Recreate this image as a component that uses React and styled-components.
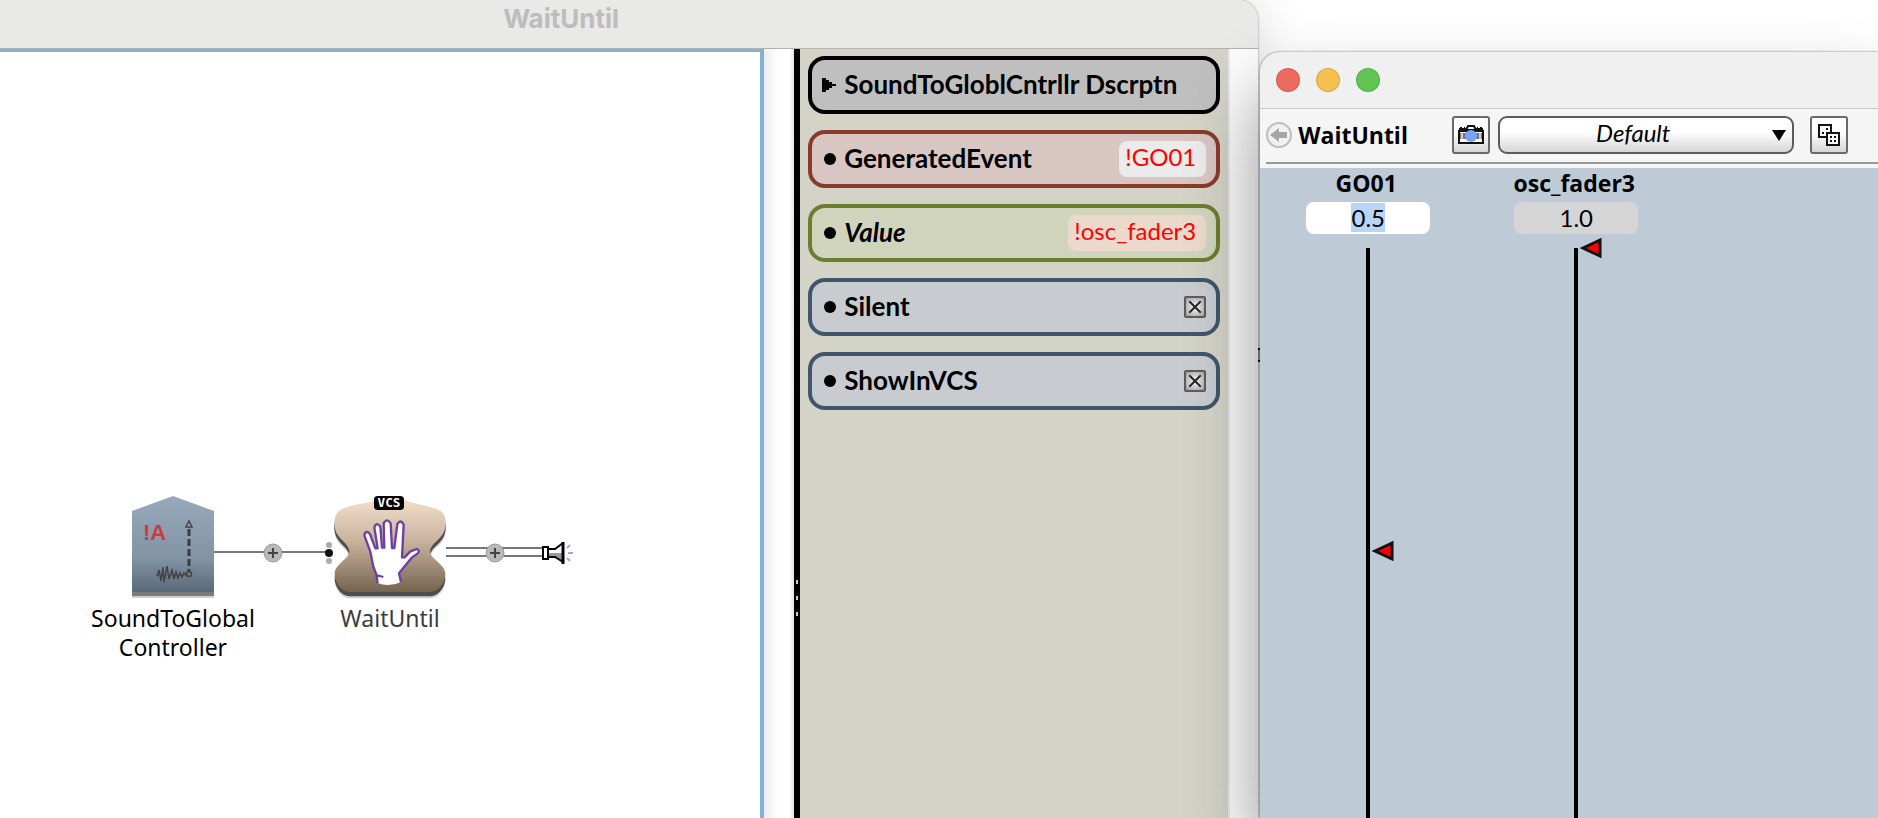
import React, { useEffect, useRef, useState } from 'react';
import styled, { createGlobalStyle, css } from 'styled-components';

const GlobalStyle = createGlobalStyle`
  * {
    box-sizing: border-box;
  }
  body {
    margin: 0;
    overflow: hidden;
    font-family: Lato, 'Liberation Sans', sans-serif;
    color: #000;
  }
  button, input, select {
    margin: 0;
    font: inherit;
    color: inherit;
  }
`;

const Desktop = styled.div`
  display: flex;
  height: 100vh;
  background: #fff;
`;

/* editor window */

const EditorWindow = styled.section`
  flex: 0 0 67%;
  display: flex;
  flex-direction: column;
  min-width: 0;
  background: #fcfcfc;
  border-top-right-radius: 20px;
  box-shadow: 0 0 2px #777, 0 0 50px rgba(0, 0, 0, 0.15);
`;
const EditorTitle = styled.header`
  height: 49px;
  padding-right: 136px;
  border-bottom: 1px solid #b3b3ab;
  border-top-right-radius: 20px;
  background: #e9e9e7;
  text-align: center;
`;
const EditorHeading = styled.h1`
  margin: 0;
  font: 700 26px/38px Inter, sans-serif;
  color: #bdbdbb;
`;
const EditorBody = styled.div`
  flex: 1;
  display: flex;
  min-height: 0;
`;
const Canvas = styled.main`
  position: relative;
  flex: 1;
  border: solid #84afd9;
  border-width: 3px 4px 0 0;
  background: #fff;
`;
const Gutter = styled.div`
  width: 30px;
  background: linear-gradient(90deg, #ededf0, #fcfcfc 40%, #fff 85%, #e4e4e4);
`;
const Splitter = styled.div`
  display: flex;
  flex-direction: column;
  align-items: center;
  gap: 12px;
  width: 6px;
  padding-top: 531px;
  background: #000;
`;
const Grip = styled.span`
  flex: none;
  width: 2px;
  height: 4px;
  background: #ccc;
`;
const Parameters = styled.aside`
  display: flex;
  flex-direction: column;
  gap: 16px;
  width: 428px;
  padding: 7px 8px;
  background: #d3d3c8;
`;
const Strip = styled.div`
  width: 30px;
  border-left: 2px solid #e9e9e9;
  background: #fcfcfc;
`;

/* sound nodes on the canvas */

const Node = styled.figure`
  position: absolute;
  left: ${({ $x }) => $x}px;
  top: ${({ $y }) => $y}px;
  display: flex;
  flex-direction: column;
  align-items: center;
  width: 180px;
  margin: 0;
  gap: 4px;

  svg {
    display: block;
  }
`;
const NodeLabel = styled.figcaption`
  font: 400 23px/29px 'Noto Sans', sans-serif;
  color: ${({ $muted }) => ($muted ? '#3c3c3c' : '#000')};
  text-align: center;
`;
const Wire = styled.svg`
  position: absolute;
  left: ${({ $x }) => $x}px;
  top: 482px;
`;

/* parameter rows */

const tones = {
  plain: { line: '#000', fill: '#bfbfbf' },
  event: { line: '#8a3a2b', fill: '#d8c6c3' },
  value: { line: '#6c7d2f', fill: '#d0d4bd' },
  flag: { line: '#41566b', fill: '#c8ccd0' },
};

const Row = styled.div`
  display: flex;
  align-items: center;
  height: 58px;
  padding: 0 10px;
  border: 4px solid ${({ $tone }) => tones[$tone].line};
  border-radius: 17px;
  background: ${({ $tone }) => tones[$tone].fill};
`;
const Disclosure = styled.button`
  display: flex;
  align-items: center;
  width: 100%;
  padding: 0;
  border: 0;
  background: none;
  text-align: left;
`;
const Bullet = styled.span`
  flex: none;
  width: 12px;
  height: 12px;
  margin: 0 8px 0 2px;
  border-radius: 50%;
  background: #000;
`;
const labelText = css`
  padding-bottom: 2px;
  font-size: 26px;
  font-weight: 700;
  line-height: 32px;
  font-style: ${({ $italic }) => ($italic ? 'italic' : 'normal')};
`;
const RowLabel = styled.label`
  ${labelText}
  flex: 1;
`;
const RowTitle = styled.span`
  ${labelText}
`;
const Chip = styled.input`
  field-sizing: content;
  height: 36px;
  padding: 0 10px 6px 6px;
  border: 0;
  border-radius: 8px;
  background: ${({ $warm }) => ($warm ? '#ebdacb' : '#ebebeb')};
  color: #f00;
  font-size: 24px;
`;
const Check = styled.input`
  appearance: none;
  display: grid;
  place-items: center;
  width: 22px;
  height: 22px;
  border: 2px solid #5c5c5c;
  border-radius: 2px;
  background: radial-gradient(#ddd 30%, #a0a0a0);

  &:checked::before {
    content: '';
    width: 12px;
    height: 12px;
    background:
      linear-gradient(45deg, transparent 43%, #333 43% 57%, transparent 57%),
      linear-gradient(-45deg, transparent 43%, #333 43% 57%, transparent 57%);
  }
`;

/* control surface window */

const ControlWindow = styled.section`
  position: relative;
  flex: 1;
  display: flex;
  flex-direction: column;
  min-width: 0;
  margin: 52px 0 0 2px;
  border-top-left-radius: 20px;
  background: #bfcad7;
  box-shadow: 0 0 2px #555, 0 40px 70px rgba(0, 0, 0, 0.42);
`;
const EdgeMark = styled.span`
  position: absolute;
  left: -2px;
  top: 296px;
  width: 2px;
  height: 14px;
  border: solid #000;
  border-width: 2px 0;
  background: #666;
`;
const ControlTitle = styled.header`
  display: flex;
  align-items: center;
  gap: 16px;
  height: 57px;
  padding-left: 16px;
  border-bottom: 1px solid #c8c8c8;
  border-top-left-radius: 20px;
  background: #f0f0f0;
`;
const Light = styled.button`
  width: 24px;
  height: 24px;
  padding: 0;
  border: 1px solid rgba(0, 0, 0, 0.12);
  border-radius: 50%;
  background: ${({ $color }) => $color};
`;
const Toolbar = styled.div`
  padding: 0 0 4px 6px;
  background: #f5f5f5;
`;
const ToolbarItems = styled.div`
  display: flex;
  align-items: center;
  height: 55px;
  padding-right: 30px;
  padding-bottom: 2px;
  border-bottom: 2px solid #999;
`;
const BackButton = styled.button`
  display: flex;
  padding: 0;
  border: 0;
  background: none;
`;
const ToolbarTitle = styled.h2`
  flex: 0 0 160px;
  margin: 0;
  padding-left: 6px;
  font: 700 23px/32px 'Open Sans', sans-serif;
`;
const IconButton = styled.button`
  display: grid;
  place-items: center;
  flex: 0 0 38px;
  height: 38px;
  padding: 0;
  border: 2px solid #6a6a6a;
  border-radius: 3px;
  background: linear-gradient(#fff 40%, #d6d6d6);
`;
const PresetBox = styled.div`
  position: relative;
  flex: 1;
  height: 38px;
  margin: 0 16px 0 8px;
`;
const Preset = styled.select`
  appearance: none;
  width: 100%;
  height: 38px;
  padding: 0 26px 5px 0;
  border: 2px solid #5c5c5c;
  border-radius: 9px;
  background: linear-gradient(#fff 40%, #d6d6d6);
  font-size: 24px;
  font-style: italic;
  text-align: center;
  text-align-last: center;
`;
const PresetArrow = styled.svg`
  position: absolute;
  right: 7px;
  top: 13px;
  pointer-events: none;
`;
const Faders = styled.div`
  flex: 1;
  display: flex;
  padding-left: 4px;
  min-height: 0;
  overflow: hidden;
`;
const FaderColumn = styled.div`
  display: flex;
  flex-direction: column;
  align-items: center;
  width: 208px;

  > * {
    flex: none;
  }
`;
const FaderLabel = styled.label`
  padding-right: 4px;
  font: 700 23px/30px 'Open Sans', sans-serif;
`;
const FaderValue = styled.input`
  width: 124px;
  height: 32px;
  margin-top: 4px;
  padding: 0 0 2px;
  border: 0;
  border-radius: 8px;
  outline: 0;
  background: ${({ $idle }) => ($idle ? '#d5d5d5' : '#fff')};
  font-size: 24px;
  text-align: center;

  &::selection {
    background: #b8d5f8;
    color: #000;
  }
`;
const FaderTrack = styled.div`
  position: relative;
  width: 4px;
  height: calc(100vh - 212px);
  margin-top: 14px;
  background: #000;
`;
const FaderRange = styled.input`
  position: absolute;
  inset: 0 auto 0 -10px;
  width: 40px;
  height: 100%;
  writing-mode: vertical-lr;
  direction: rtl;
  opacity: 0;
`;
const Marker = styled.svg`
  position: absolute;
  left: 6px;
  margin-top: -11px;
  pointer-events: none;
`;

function PlusJoint({ cx, cy }) {
  return (
    <g>
      <circle cx={cx} cy={cy} r="9" fill="#b9b9b9" stroke="#9a9a9a" />
      <path d={`M${cx - 5} ${cy}h10M${cx} ${cy - 5}v10`} stroke="#444" strokeWidth="2" />
    </g>
  );
}

function SoundIcon() {
  return (
    <svg width="88" height="104" viewBox="0 0 88 104" aria-hidden="true">
      <defs>
        <linearGradient id="steel" x1="0" y1="0" x2="0" y2="1">
          <stop offset="0" stopColor="#98a9bb" />
          <stop offset="0.65" stopColor="#8293a4" />
          <stop offset="1" stopColor="#5a6979" />
        </linearGradient>
      </defs>
      <path d="M3 20L44 5L85 20V102H3Z" fill="#777" opacity="0.35" />
      <path d="M3 20L44 5L85 20V100H3Z" fill="#7b7b7b" />
      <path d="M3 15L44 0L85 15V96H3Z" fill="url(#steel)" />
      <text x="14" y="44" fontFamily="Liberation Sans" fontSize="22" fontWeight="700" fill="#cf3a3c">!A</text>
      <path d="M60 33V75" stroke="#3c3c3c" strokeWidth="3" strokeDasharray="7 3" />
      <path d="M57 31L60 25L63 31Z" fill="#98a9bb" stroke="#444" strokeWidth="1.5" />
      <circle cx="60" cy="78" r="2.5" fill="none" stroke="#444" strokeWidth="1.5" />
      <path d="M27 79H57" stroke="#72508a" strokeWidth="1" />
      <path
        d="M28 80L30 74L32 85L34 71L35 86L38 70L40 83L43 74L45 83L47 76L49 82L51 77L53 81L55 77L57 79"
        fill="none"
        stroke="#444"
        strokeWidth="1.5"
      />
    </svg>
  );
}

const waitBody =
  'M84 96C95 82 140 74 180 66C210 52 270 52 300 66C340 76 385 84 396 96C408 110 410 128 404 150C398 176 362 190 360 214C362 240 406 252 406 282C406 310 384 336 362 336H118C96 336 74 310 74 282C74 252 116 240 118 214C116 190 82 176 76 150C70 128 72 110 84 96Z';

function WaitIcon() {
  return (
    <svg width="114" height="104" viewBox="69 48 342 312" aria-hidden="true">
      <defs>
        <linearGradient id="sand" x1="0" y1="0" x2="0" y2="1">
          <stop offset="0" stopColor="#f3dfcb" />
          <stop offset="0.45" stopColor="#c9b39f" />
          <stop offset="1" stopColor="#76644f" />
        </linearGradient>
      </defs>
      <path d={waitBody} transform="translate(0 19)" fill="#888" opacity="0.4" />
      <path d={waitBody} transform="translate(0 13)" fill="#4d4d4d" />
      <path d={waitBody} fill="url(#sand)" />
      <path
        d="M203 310L199 283L190 260L181 215L163 166Q167 148 180 162L196 205H203L193 142Q200 124 211 140L216 203H223L221 130Q231 112 242 130L246 204H253L262 132Q272 116 281 134L276 232H284L300 215L320 207Q332 212 322 221L305 233L267 280L273 306Q240 322 203 310Z"
        fill="#fff"
      />
      <path
        d="M203 310L199 283L190 260L181 215L163 166Q167 148 180 162L196 205H203L193 142Q200 124 211 140L216 203H223L221 130Q231 112 242 130L246 204H253L262 132Q272 116 281 134L276 232H284L300 215L320 207Q332 212 322 221L305 233L267 280L273 306M199 285L220 291"
        fill="none"
        stroke="#6f3fa3"
        strokeWidth="7"
        strokeLinejoin="round"
      />
      <rect x="192" y="48" width="90" height="42" rx="11" />
      <text x="237" y="82" textAnchor="middle" fontFamily="DejaVu Sans Mono" fontSize="38" fontWeight="700" fill="#fff">VCS</text>
    </svg>
  );
}

function InputWire() {
  return (
    <Wire $x={214} width="122" height="36" aria-hidden="true">
      <path d="M0 18H116" stroke="#777" strokeWidth="2" />
      <PlusJoint cx={59} cy={19} />
      <circle cx="115" cy="11" r="3" fill="#aaa" />
      <circle cx="115" cy="19" r="4" fill="#111" />
      <circle cx="115" cy="27" r="3" fill="#aaa" />
    </Wire>
  );
}

function OutputWire() {
  return (
    <Wire $x={446} width="128" height="36" aria-hidden="true">
      <path d="M0 14H98M0 22H98" stroke="#777" strokeWidth="2" />
      <PlusJoint cx={49} cy={19} />
      <path d="M103 15H109L117 9V29L109 23H103Z" fill="#fff" />
      <path d="M103 19H117V28L109 23H103Z" fill="#999" />
      <path d="M103 15H109L117 9M103 23H109L117 28" fill="none" stroke="#000" strokeWidth="2" />
      <rect x="97" y="13" width="5" height="12" fill="#fff" stroke="#000" strokeWidth="2" />
      <path d="M117 8V30" stroke="#000" strokeWidth="3" />
      <path d="M121 14L124 11M122 19H127M121 24L124 27" stroke="#a3a8dd" strokeWidth="2" />
    </Wire>
  );
}

function CameraIcon() {
  return (
    <svg width="26" height="20" viewBox="0 0 26 20" aria-hidden="true">
      <path d="M1 6H25V18H1Z" fill="#fff" stroke="#111" strokeWidth="2" />
      <path d="M2 8H24V14H2Z" fill="#777" />
      <path d="M4 8V14M22 8V14" stroke="#ccc" strokeWidth="2" />
      <path d="M1 4H25M2 3H4M6 3H7M19 3H20M22 3H24" stroke="#111" strokeWidth="2" />
      <path d="M8 5L10 1H16L18 5Z" fill="#fff" stroke="#111" strokeWidth="2" />
      <circle cx="13" cy="11" r="6" fill="#76a4fb" />
    </svg>
  );
}

function DiceIcon() {
  return (
    <svg width="24" height="24" viewBox="0 0 24 24" aria-hidden="true">
      <rect x="2" y="2" width="12" height="12" fill="#f8f8f8" stroke="#111" strokeWidth="2" />
      <path d="M9 5h2v2h-2zM5 9h2v2h-2z" fill="#111" />
      <rect x="10" y="10" width="12" height="12" fill="#f8f8f8" stroke="#111" strokeWidth="2" />
      <path d="M13 13h2v2h-2zM17 13h2v2h-2zM13 17h2v2h-2zM17 17h2v2h-2z" fill="#111" />
    </svg>
  );
}

function TextParameter({ id, label, value, tone, italic, warm }) {
  return (
    <Row $tone={tone}>
      <Bullet />
      <RowLabel htmlFor={id} $italic={italic}>{label}</RowLabel>
      <Chip id={id} defaultValue={value} $warm={warm} />
    </Row>
  );
}

function FlagParameter({ id, label }) {
  return (
    <Row $tone="flag">
      <Bullet />
      <RowLabel htmlFor={id}>{label}</RowLabel>
      <Check id={id} type="checkbox" defaultChecked />
    </Row>
  );
}

function Fader({ name, initial, active }) {
  const [value, setValue] = useState(initial);
  const field = useRef(null);

  useEffect(() => {
    if (active) {
      field.current.focus();
      field.current.select();
    }
  }, [active]);

  return (
    <FaderColumn>
      <FaderLabel htmlFor={name}>{name}</FaderLabel>
      <FaderValue
        id={name}
        ref={field}
        $idle={!active}
        value={value}
        onChange={(e) => setValue(e.target.value)}
      />
      <FaderTrack>
        <Marker
          width="22"
          height="22"
          viewBox="0 0 22 22"
          style={{ top: `${(1 - Number(value)) * 100}%` }}
        >
          <path d="M3 11L20 3V19Z" fill="#f00" stroke="#111" strokeWidth="3" />
        </Marker>
        <FaderRange
          type="range"
          min="0"
          max="1"
          step="0.1"
          aria-label={`${name} fader`}
          value={value}
          onChange={(e) => setValue(Number(e.target.value).toFixed(1))}
        />
      </FaderTrack>
    </FaderColumn>
  );
}

function Editor() {
  return (
    <EditorWindow>
      <EditorTitle>
        <EditorHeading>WaitUntil</EditorHeading>
      </EditorTitle>
      <EditorBody>
        <Canvas>
          <InputWire />
          <OutputWire />
          <Node $x={83} $y={444}>
            <SoundIcon />
            <NodeLabel>SoundToGlobal<br />Controller</NodeLabel>
          </Node>
          <Node $x={300} $y={444}>
            <WaitIcon />
            <NodeLabel $muted>WaitUntil</NodeLabel>
          </Node>
        </Canvas>
        <Gutter />
        <Splitter>
          <Grip />
          <Grip />
          <Grip />
        </Splitter>
        <Parameters>
          <Row $tone="plain">
            <Disclosure>
              <svg width="22" height="16" viewBox="0 0 22 16" aria-hidden="true">
                <path d="M0 1H4V3H7V5H10V7H14V9H10V11H7V13H4V15H0Z" />
              </svg>
              <RowTitle>SoundToGloblCntrllr Dscrptn</RowTitle>
            </Disclosure>
          </Row>
          <TextParameter id="generated-event" label="GeneratedEvent" value="!GO01" tone="event" />
          <TextParameter id="value" label="Value" value="!osc_fader3" tone="value" italic warm />
          <FlagParameter id="silent" label="Silent" />
          <FlagParameter id="show-in-vcs" label="ShowInVCS" />
        </Parameters>
        <Strip />
      </EditorBody>
    </EditorWindow>
  );
}

function ControlSurface() {
  return (
    <ControlWindow>
      <EdgeMark />
      <ControlTitle>
        <Light $color="#ec6a5e" aria-label="Close" />
        <Light $color="#f4bf4f" aria-label="Minimize" />
        <Light $color="#61c554" aria-label="Zoom" />
      </ControlTitle>
      <Toolbar>
        <ToolbarItems>
          <BackButton aria-label="Back">
            <svg width="26" height="26" viewBox="0 0 26 26" aria-hidden="true">
              <circle cx="13" cy="13" r="12" fill="#f1f1f1" stroke="#bdbdbd" strokeWidth="2" />
              <path d="M4 13L13 6V10H21V16H13V20Z" fill="#a6a6a6" />
            </svg>
          </BackButton>
          <ToolbarTitle>WaitUntil</ToolbarTitle>
          <IconButton aria-label="Take snapshot">
            <CameraIcon />
          </IconButton>
          <PresetBox>
            <Preset aria-label="Preset" defaultValue="Default">
              <option>Default</option>
            </Preset>
            <PresetArrow width="16" height="12" viewBox="0 0 16 12" aria-hidden="true">
              <path d="M1 1H15L8 12Z" />
            </PresetArrow>
          </PresetBox>
          <IconButton aria-label="Randomize">
            <DiceIcon />
          </IconButton>
        </ToolbarItems>
      </Toolbar>
      <Faders>
        <Fader name="GO01" initial="0.5" active />
        <Fader name="osc_fader3" initial="1.0" />
      </Faders>
    </ControlWindow>
  );
}

export default function App() {
  return (
    <>
      <GlobalStyle />
      <Desktop>
        <Editor />
        <ControlSurface />
      </Desktop>
    </>
  );
}
